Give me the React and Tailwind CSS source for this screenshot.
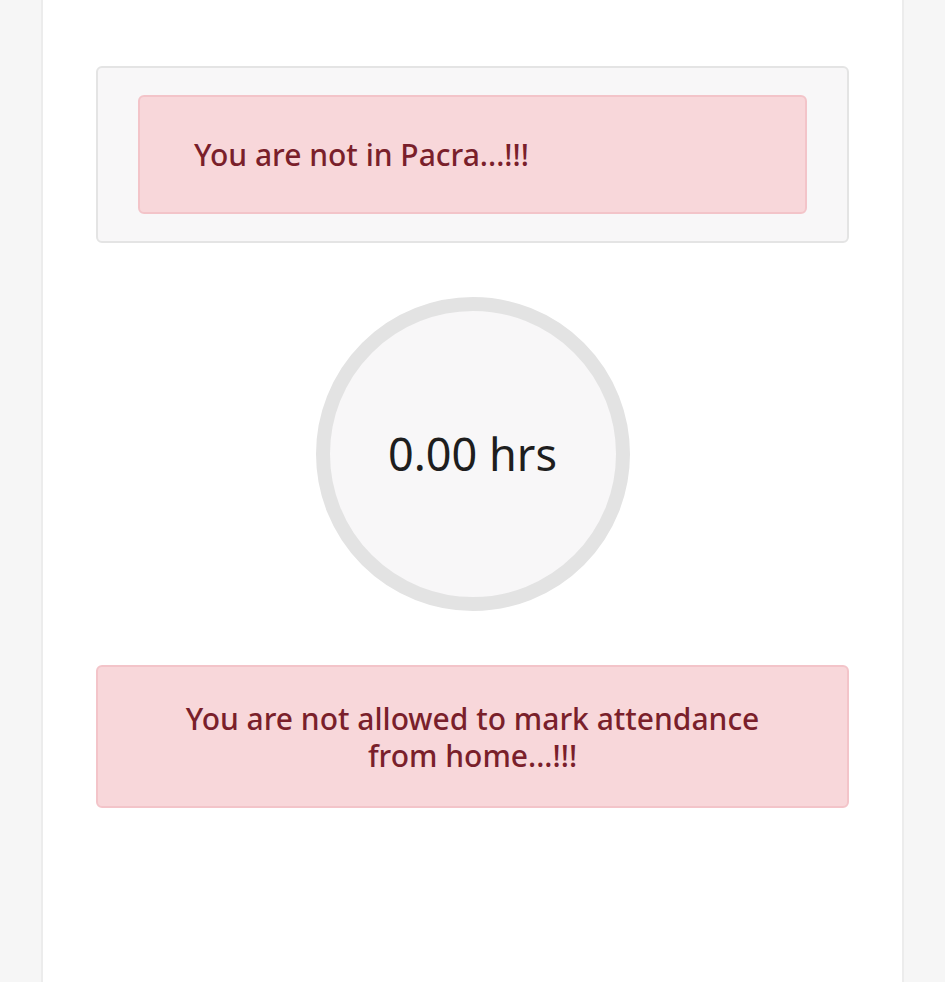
export default function App() {
  return (
    <div
      className="min-h-screen bg-[#f6f6f6] flex justify-center"
      style={{ fontFamily: "'Noto Sans', Lato, sans-serif" }}
    >
      <div className="w-[863px] min-h-[982px] bg-white border-x-2 border-[#ececec] pt-[66px] px-[53px]">
        <div className="bg-[#f8f7f8] border-2 border-[#e4e4e4] rounded-md px-[40px] py-[27px]">
          <div className="bg-[#f8d7da] border-2 border-[#f3c4c9] rounded-md h-[119px] flex items-center pl-[54px]">
            <p className="text-[30px] font-medium text-[#7a1f2b]">You are not in Pacra...!!!</p>
          </div>
        </div>

        <div className="flex justify-center mt-[54px]">
          <div className="w-[314px] h-[314px] rounded-full border-[14px] border-[#e3e3e3] bg-[#f8f7f8] flex items-center justify-center">
            <span className="text-[45px] text-[#1e1e1e]">0.00 hrs</span>
          </div>
        </div>

        <div className="mt-[54px] bg-[#f8d7da] border-2 border-[#f3c4c9] rounded-md h-[143px] flex items-center justify-center">
          <p className="text-[30px] leading-[37px] font-medium text-[#7a1f2b] text-center">
            You are not allowed to mark attendance
            <br />
            from home...!!!
          </p>
        </div>
      </div>
    </div>
  );
}
